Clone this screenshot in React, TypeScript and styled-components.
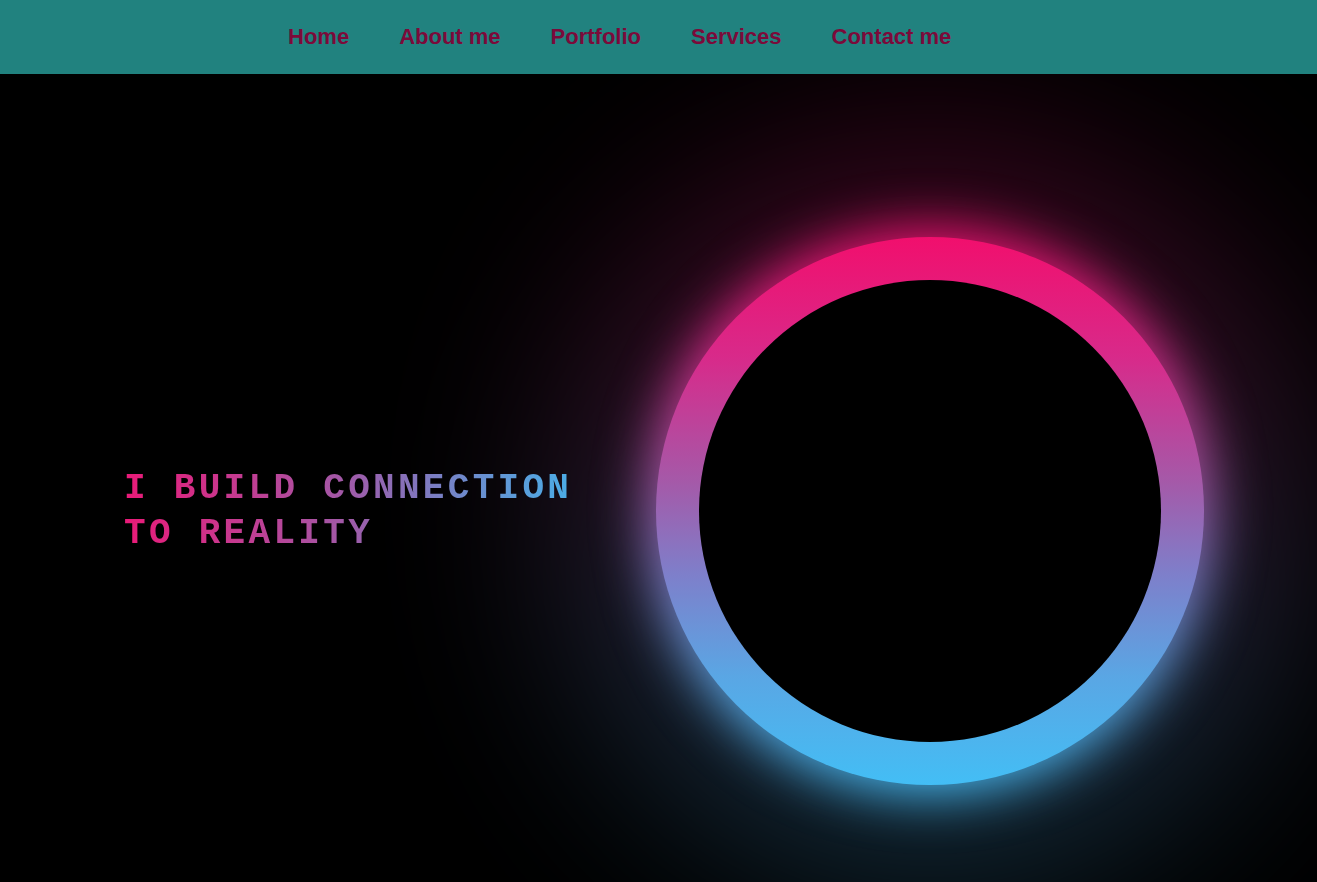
import React from "react";
import styled, { createGlobalStyle } from "styled-components";

const Global = createGlobalStyle`
  html, body { margin: 0; padding: 0; background: #000; overflow: hidden; }
  * { box-sizing: border-box; }
`;

const Page = styled.div`
  width: 100%;
  height: 882px;
  background: #000;
  display: flex;
  flex-direction: column;
  overflow: hidden;
`;

const NavBar = styled.nav`
  position: relative;
  z-index: 2;
  height: 74px;
  flex: none;
  background: #21827f;
  display: flex;
  align-items: center;
  padding-left: 288px;
  gap: 50px;
`;

const NavLink = styled.a`
  font-family: "Liberation Sans", Arial, sans-serif;
  font-weight: 700;
  font-size: 22px;
  color: #7b0a3a;
  text-decoration: none;
  line-height: 1;
`;

const Hero = styled.section`
  flex: 1;
  display: flex;
  align-items: center;
  padding: 66px 0 0 124px;
`;

const Headline = styled.h1`
  margin: 0;
  flex: none;
  width: 532px;
  font-family: "Courier New", "Nimbus Mono PS", "Liberation Mono", monospace;
  font-weight: 700;
  font-size: 36px;
  letter-spacing: 3.3px;
  line-height: 45px;
  white-space: nowrap;
`;

const GradientText = styled.span`
  display: inline-block;
  background: linear-gradient(90deg, #ea1a78 0%, #a05aa8 50%, #3fb8ee 100%);
  -webkit-background-clip: text;
  background-clip: text;
  color: transparent;
`;

const ringGradient = `linear-gradient(180deg, #f10f6d 0%, #d82a8a 22%, #a45aa9 45%, #7d80cb 62%, #5aa6e4 80%, #43bef5 100%)`;

const RingWrap = styled.div`
  position: relative;
  z-index: 0;
  isolation: isolate;
  flex: none;
`;

const Ring = styled.div`
  position: relative;
  width: 548px;
  height: 548px;
  border-radius: 50%;
  background: ${ringGradient};
  display: flex;
  align-items: center;
  justify-content: center;

  &::before {
    content: "";
    position: absolute;
    inset: -8px;
    border-radius: 50%;
    background: ${ringGradient};
    filter: blur(26px);
    z-index: -1;
  }

  &::after {
    content: "";
    position: absolute;
    inset: -90px;
    border-radius: 50%;
    background: ${ringGradient};
    filter: blur(100px);
    opacity: 0.28;
    z-index: -2;
  }
`;

const Core = styled.div`
  width: 462px;
  height: 462px;
  border-radius: 50%;
  background: #000;
  position: relative;
  z-index: 1;
`;

export default function App() {
  return (
    <>
      <Global />
      <Page>
        <NavBar>
          <NavLink href="#">Home</NavLink>
          <NavLink href="#">About me</NavLink>
          <NavLink href="#">Portfolio</NavLink>
          <NavLink href="#">Services</NavLink>
          <NavLink href="#">Contact me</NavLink>
        </NavBar>
        <Hero>
          <Headline>
            <GradientText>
              I BUILD CONNECTION
              <br />
              TO REALITY
            </GradientText>
          </Headline>
          <RingWrap>
            <Ring>
              <Core />
            </Ring>
          </RingWrap>
        </Hero>
      </Page>
    </>
  );
}
